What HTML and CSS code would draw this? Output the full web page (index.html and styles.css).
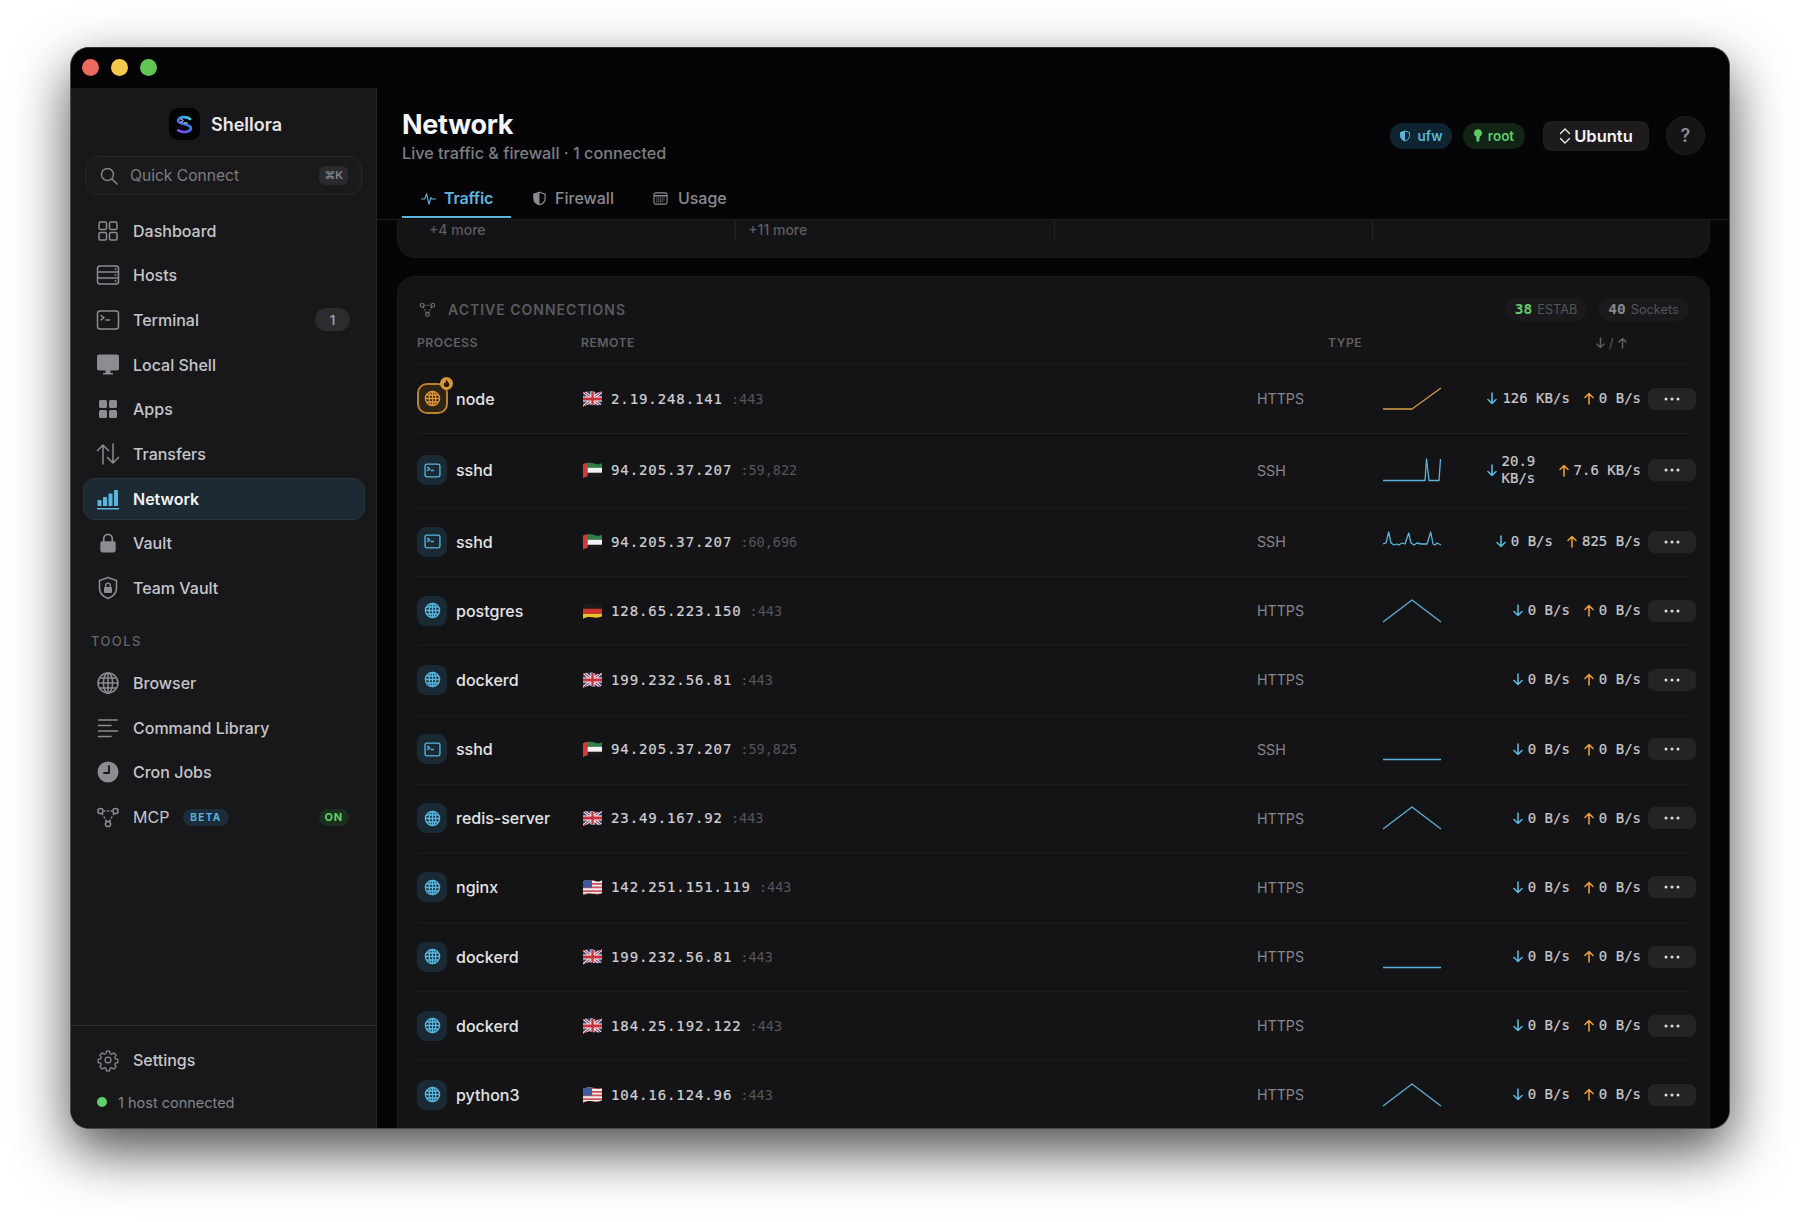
FILE: index.html
```html
<!DOCTYPE html>
<html lang="en">
<head>
<meta charset="utf-8">
<title>Shellora – Network</title>
<link rel="stylesheet" href="styles.css">
</head>
<body>
<svg class="defs" aria-hidden="true">
  <symbol id="i-globe" viewBox="0 0 24 24"><g fill="none" stroke="currentColor"><circle cx="12" cy="12" r="10"/><ellipse cx="12" cy="12" rx="4.6" ry="10"/><path d="M12 2v20M2 12h20M3.4 7h17.2M3.4 17h17.2"/></g></symbol>
  <symbol id="i-term" viewBox="0 0 24 24"><g fill="none" stroke="currentColor" stroke-linejoin="round" stroke-linecap="round"><rect x="1.5" y="3" width="21" height="18" rx="2.5"/><path d="M5 7.5l3 2.2-3 2.2M10 12h3.5"/></g></symbol>
  <symbol id="i-net" viewBox="0 0 24 24"><g fill="none" stroke="currentColor" stroke-width="1.5"><circle cx="4.5" cy="6" r="2.6"/><circle cx="19.5" cy="6" r="2.6"/><circle cx="12" cy="19" r="2.6"/><path d="M7.5 6h9M6 8.5l4.6 8M18 8.5l-4.6 8" stroke-dasharray="2 1.6"/></g></symbol>
  <symbol id="i-shield" viewBox="0 0 24 24"><path d="M12 2l9 3v6.500c0 5.300-3.700 9-9 10.500-5.300-1.500-9-5.200-9-10.500V5z" fill="none" stroke="currentColor" stroke-width="2"/><path d="M12 2l-9 3v6.500c0 5.300 3.700 9 9 10.500z" fill="currentColor"/></symbol>
  <symbol id="i-down" viewBox="0 0 10 13"><path d="M5 1v10.500M1 7.500l4 4 4-4" fill="none" stroke="currentColor" stroke-width="1.600" stroke-linecap="round" stroke-linejoin="round"/></symbol>
  <symbol id="i-up" viewBox="0 0 10 13"><path d="M5 12V1.500M1 5.500l4-4 4 4" fill="none" stroke="currentColor" stroke-width="1.600" stroke-linecap="round" stroke-linejoin="round"/></symbol>
  <symbol id="i-more" viewBox="0 0 16 4"><g fill="currentColor"><circle cx="2" cy="2" r="1.500"/><circle cx="8" cy="2" r="1.500"/><circle cx="14" cy="2" r="1.500"/></g></symbol>
  <symbol id="f-uk" viewBox="0 0 20 14" preserveAspectRatio="none"><rect width="20" height="14" fill="#2f3f78"/><path d="M0 0l20 14M20 0L0 14" stroke="#eee" stroke-width="3"/><path d="M0 0l20 14M20 0L0 14" stroke="#c8303f" stroke-width="1"/><path d="M10 0v14M0 7h20" stroke="#eee" stroke-width="4.500"/><path d="M10 0v14M0 7h20" stroke="#c8303f" stroke-width="2.500"/></symbol>
  <symbol id="f-ae" viewBox="0 0 20 14" preserveAspectRatio="none"><rect width="20" height="5" fill="#2e8049"/><rect y="5" width="20" height="4.500" fill="#f2f2f2"/><rect y="9.500" width="20" height="4.500" fill="#1a1a1a"/><rect width="5" height="14" fill="#d03a3a"/></symbol>
  <symbol id="f-de" viewBox="0 0 20 14" preserveAspectRatio="none"><rect width="20" height="5" fill="#1c1c1c"/><rect y="5" width="20" height="4.500" fill="#d0342f"/><rect y="9.500" width="20" height="4.500" fill="#f0bf2c"/></symbol>
  <symbol id="f-us" viewBox="0 0 20 14" preserveAspectRatio="none"><rect width="20" height="14" fill="#eee"/><path d="M0 1h20M0 4.200h20M0 7.400h20M0 10.600h20M0 13.400h20" stroke="#d0525a" stroke-width="1.600"/><rect width="9.500" height="7.500" fill="#3d5a9e"/></symbol>
</svg>

<div class="window">
  <div class="titlebar">
    <span class="light light-red"></span><span class="light light-yellow"></span><span class="light light-green"></span>
  </div>
  <div class="body">
    <aside class="sidebar">
      <div class="brand">
        <span class="logo">
          <svg width="19" height="21" viewBox="0 0 24 24"><defs><linearGradient id="lg" x1=".9" y1="0" x2=".1" y2="1"><stop offset="0" stop-color="#3fd8d0"/><stop offset=".45" stop-color="#3a78f0"/><stop offset="1" stop-color="#8f45f0"/></linearGradient></defs><path d="M19 5C15 2 6 1.500 4 6.500c-1.500 5 15 4.500 16 9.500 .8 5.500-10 7-16 3.500" fill="none" stroke="url(#lg)" stroke-width="3.400" stroke-linecap="round"/><path d="M7.500 5l3 2-3 2M11.500 10h4" fill="none" stroke="#eef" stroke-width="1.200" stroke-linecap="round"/></svg>
        </span>
        <span class="brand-name">Shellora</span>
      </div>
      <div class="search">
        <svg class="search-icon" width="18" height="18" viewBox="0 0 18 18"><circle cx="7.500" cy="7.500" r="6" fill="none" stroke="currentColor" stroke-width="1.500"/><path d="M12 12l5 5" stroke="currentColor" stroke-width="1.500" stroke-linecap="round"/></svg>
        <span class="search-label">Quick Connect</span>
        <span class="kbd">⌘K</span>
      </div>
      <nav class="nav">
        <a class="item"><svg class="nav-icon" viewBox="0 0 24 24"><g fill="none" stroke="currentColor" stroke-width="1.500"><rect x="3" y="3" width="7.500" height="7.500" rx="1.500"/><rect x="13.500" y="3" width="7.500" height="7.500" rx="1.500"/><rect x="3" y="13.500" width="7.500" height="7.500" rx="1.500"/><rect x="13.500" y="13.500" width="7.500" height="7.500" rx="1.500"/></g></svg><span>Dashboard</span></a>
        <a class="item"><svg class="nav-icon" viewBox="0 0 24 24"><g fill="none" stroke="currentColor" stroke-width="1.500"><rect x="1.500" y="3" width="21" height="18" rx="2.500"/><path d="M1.500 9h21M1.500 15h21"/></g><g fill="currentColor"><circle cx="19.500" cy="6" r=".9"/><circle cx="19.500" cy="12" r=".9"/><circle cx="19.500" cy="18" r=".9"/></g></svg><span>Hosts</span></a>
        <a class="item"><svg class="nav-icon"><use href="#i-term"/></svg><span>Terminal</span><span class="count">1</span></a>
        <a class="item"><svg class="nav-icon" viewBox="0 0 24 24"><path fill="currentColor" d="M3 1.500h18A2 2 0 0 1 23 3.500v12a2 2 0 0 1-2 2h-6.500v2.500h2.500v1.500H7V20h2.500v-2.500H3a2 2 0 0 1-2-2v-12a2 2 0 0 1 2-2z"/></svg><span>Local Shell</span></a>
        <a class="item"><svg class="nav-icon" viewBox="0 0 24 24"><g fill="currentColor"><rect x="3" y="3" width="8" height="8" rx="1.500"/><rect x="13" y="3" width="8" height="8" rx="1.500"/><rect x="3" y="13" width="8" height="8" rx="1.500"/><rect x="13" y="13" width="8" height="8" rx="1.500"/></g></svg><span>Apps</span></a>
        <a class="item"><svg class="nav-icon" viewBox="0 0 24 24"><path d="M7 22V3M1.500 8.500L7 3l5.500 5.500M17 2v19M11.500 15.500L17 21l5.500-5.500" fill="none" stroke="currentColor" stroke-width="1.500" stroke-linecap="round" stroke-linejoin="round"/></svg><span>Transfers</span></a>
        <a class="item item-active"><svg class="nav-icon" viewBox="0 0 24 24"><g fill="currentColor"><rect x="1.500" y="13" width="4" height="6" rx=".6"/><rect x="7" y="10" width="4" height="9" rx=".6"/><rect x="12.500" y="6.500" width="4" height="12.500" rx=".6"/><rect x="18" y="3" width="4" height="16" rx=".6"/><rect x="1" y="21" width="22" height="1.500"/></g></svg><span>Network</span></a>
        <a class="item"><svg class="nav-icon" viewBox="-2 0 28 24"><path fill="currentColor" fill-rule="evenodd" d="M12 1a6 6 0 0 1 6 6v3h.500A2.500 2.500 0 0 1 21 12.500v8a2.500 2.500 0 0 1-2.500 2.500h-13A2.500 2.500 0 0 1 3 20.500v-8A2.500 2.500 0 0 1 5.500 10H6V7a6 6 0 0 1 6-6zm0 2a4 4 0 0 0-4 4v3h8V7a4 4 0 0 0-4-4z"/></svg><span>Vault</span></a>
        <a class="item"><svg class="nav-icon" viewBox="0 0 24 24"><path d="M12 1.500l8.500 3V12c0 5-3.500 8.500-8.500 10.500C7 20.500 3.500 17 3.500 12V4.500z" fill="none" stroke="currentColor" stroke-width="1.600"/><path fill="currentColor" d="M12 6.500a3 3 0 0 1 3 3V11a1 1 0 0 1 1 1v4a1 1 0 0 1-1 1H9a1 1 0 0 1-1-1v-4a1 1 0 0 1 1-1V9.500a3 3 0 0 1 3-3zm0 1.300a1.700 1.700 0 0 0-1.700 1.700V11h3.400V9.500A1.700 1.700 0 0 0 12 7.800z"/></svg><span>Team Vault</span></a>
      </nav>
      <div class="section">TOOLS</div>
      <nav class="nav nav-tools">
        <a class="item"><svg class="nav-icon"><use href="#i-globe"/></svg><span>Browser</span></a>
        <a class="item"><svg class="nav-icon" viewBox="0 0 24 24"><path d="M2.500 4h19M2.500 9.500H15M2.500 15h19M2.500 20.500H15" fill="none" stroke="currentColor" stroke-width="1.600" stroke-linecap="round"/></svg><span>Command Library</span></a>
        <a class="item"><svg class="nav-icon" viewBox="0 0 24 24"><circle cx="12" cy="12" r="10.500" fill="currentColor"/><path d="M13 6v7H8" fill="none" stroke="#18181b" stroke-width="1.800" stroke-linecap="round" stroke-linejoin="round"/></svg><span>Cron Jobs</span></a>
        <a class="item item-mcp"><svg class="nav-icon"><use href="#i-net"/></svg><span>MCP</span><span class="beta">BETA</span><span class="on">ON</span></a>
      </nav>
      <div class="foot">
        <a class="item"><svg class="nav-icon" viewBox="-1.500 -1.500 27 27"><g fill="none" stroke="currentColor" stroke-width="1.400" stroke-linejoin="round"><path d="M10.200 2h3.600l.5 2.800 1.900.8 2.400-1.600 2.500 2.500-1.600 2.400.8 1.900 2.800.5v3.600l-2.800.5-.8 1.900 1.600 2.400-2.500 2.500-2.400-1.600-1.900.8-.5 2.800h-3.600l-.5-2.800-1.900-.8-2.400 1.600-2.500-2.500 1.600-2.400-.8-1.900-2.800-.5v-3.600l2.800-.5.8-1.900-1.600-2.400L5.400 3.900l2.400 1.600 1.900-.8z"/><circle cx="12" cy="12" r="3.300"/></g></svg><span>Settings</span></a>
        <div class="status"><span class="dot"></span><span>1 host connected</span></div>
      </div>
    </aside>

    <main class="main">
      <header class="head">
        <div class="head-top">
          <div class="titles">
            <h1 class="title">Network</h1>
            <p class="sub">Live traffic &amp; firewall · 1 connected</p>
          </div>
          <div class="actions">
            <span class="chip chip-blue"><svg class="chip-icon"><use href="#i-shield"/></svg>ufw</span>
            <span class="chip chip-green"><svg class="chip-icon chip-key" viewBox="5 0 14 24"><path fill="currentColor" d="M12 1a7 7 0 0 1 3 13.300V18l-1.500 1.500L15 21l-3 2.500-3-2.500V14.300A7 7 0 0 1 12 1z"/></svg>root</span>
            <button class="distro"><svg width="12" height="18" viewBox="0 0 12 18"><path d="M1.500 6.500L6 2l4.500 4.500M1.500 11.500L6 16l4.500-4.500" fill="none" stroke="currentColor" stroke-width="1.300" stroke-linecap="round" stroke-linejoin="round"/></svg>Ubuntu</button>
            <button class="help">?</button>
          </div>
        </div>
        <div class="tabs">
          <a class="tab tab-active"><svg class="tab-icon" viewBox="0 0 16 16"><path d="M.5 8.500h3.500L6 3l2.500 11L10.500 7l1 1.500h4" fill="none" stroke="currentColor" stroke-width="1.200" stroke-linecap="round" stroke-linejoin="round"/></svg>Traffic</a>
          <a class="tab"><svg class="tab-icon"><use href="#i-shield"/></svg>Firewall</a>
          <a class="tab"><svg class="tab-icon tab-icon-cal" viewBox="0 0 16 16"><rect x="1" y="2" width="14" height="12" rx="2" fill="none" stroke="currentColor" stroke-width="1.200"/><path d="M1 5h14" stroke="currentColor" stroke-width="1.600"/><path d="M3.500 7.500h9M3.500 9.500h9M3.500 11.500h7" stroke="currentColor" stroke-width="1.100" stroke-dasharray="1.200 .7"/></svg>Usage</a>
        </div>
      </header>

      <div class="content">
        <section class="card-top">
          <div class="top-cell">+4 more</div>
          <div class="top-cell">+11 more</div>
          <div class="top-cell"></div>
          <div class="top-cell"></div>
        </section>

        <section class="card">
          <div class="card-head">
            <svg class="card-icon"><use href="#i-net"/></svg>
            <h2 class="card-title">ACTIVE CONNECTIONS</h2>
            <span class="stat stat-first"><b class="stat-green">38</b> ESTAB</span>
            <span class="stat stat-socks"><b class="stat-grey">40</b> Sockets</span>
          </div>
          <div class="thead">
            <span>PROCESS</span><span>REMOTE</span><span>TYPE</span>
            <span class="th-rate"><svg class="th-arrow"><use href="#i-down"/></svg> / <svg class="th-arrow"><use href="#i-up"/></svg></span>
          </div>

          <div class="rows">
            <div class="row row-first">
              <div class="proc proc-hot"><span class="pi pi-hot"><svg class="pi-svg"><use href="#i-globe"/></svg><span class="hot-badge"><svg width="9" height="9" viewBox="0 0 10 10"><path d="M5 .5c.4 1.800 3 3 3 5.500a3 3 0 0 1-6 0C2 4.800 2.700 4 3.300 3.500c.1.700.4 1 .8 1.200C4.100 3 4.300 1.500 5 .5z" fill="#2a1c08"/></svg></span></span><span class="name">node</span></div>
              <div class="remote"><svg class="flag"><use href="#f-uk"/></svg><span class="ip">2.19.248.141</span><span class="port">:443</span></div>
              <div class="type">HTTPS</div>
              <svg class="spark spark-hot" viewBox="0 0 58 24"><path d="M0 22h29L58 1"/></svg>
              <div class="rates"><span class="rate"><svg class="arr arr-down"><use href="#i-down"/></svg>126 KB/s</span><span class="rate"><svg class="arr arr-up"><use href="#i-up"/></svg>0 B/s</span></div>
              <button class="more"><svg width="16" height="4"><use href="#i-more"/></svg></button>
            </div>
            <div class="row row-tall">
              <div class="proc"><span class="pi"><svg class="pi-svg"><use href="#i-term"/></svg></span><span class="name">sshd</span></div>
              <div class="remote"><svg class="flag"><use href="#f-ae"/></svg><span class="ip">94.205.37.207</span><span class="port">:59,822</span></div>
              <div class="type">SSH</div>
              <svg class="spark" viewBox="0 0 58 24"><path d="M0 22.500h42L43.500 1 46 22.500h10L57.500 1"/></svg>
              <div class="rates"><span class="rate rate-wrap"><svg class="arr arr-down"><use href="#i-down"/></svg><span>20.9 KB/s</span></span><span class="rate"><svg class="arr arr-up"><use href="#i-up"/></svg>7.6 KB/s</span></div>
              <button class="more"><svg width="16" height="4"><use href="#i-more"/></svg></button>
            </div>
            <div class="row">
              <div class="proc"><span class="pi"><svg class="pi-svg"><use href="#i-term"/></svg></span><span class="name">sshd</span></div>
              <div class="remote"><svg class="flag"><use href="#f-ae"/></svg><span class="ip">94.205.37.207</span><span class="port">:60,696</span></div>
              <div class="type">SSH</div>
              <svg class="spark" viewBox="0 0 58 24"><path d="M0 14l3-1L5.700 2 8 13l3 2 3-1 2 1 3-2 3 1L25.700 3 28 13l3 2 3-2 4 1h6l3.700-12L50 14l2 1 2-2 2 1 2 1"/></svg>
              <div class="rates"><span class="rate"><svg class="arr arr-down"><use href="#i-down"/></svg>0 B/s</span><span class="rate"><svg class="arr arr-up"><use href="#i-up"/></svg>825 B/s</span></div>
              <button class="more"><svg width="16" height="4"><use href="#i-more"/></svg></button>
            </div>
            <div class="row">
              <div class="proc"><span class="pi"><svg class="pi-svg"><use href="#i-globe"/></svg></span><span class="name">postgres</span></div>
              <div class="remote"><svg class="flag"><use href="#f-de"/></svg><span class="ip">128.65.223.150</span><span class="port">:443</span></div>
              <div class="type">HTTPS</div>
              <svg class="spark" viewBox="0 0 58 24"><path d="M0 23L29 1l29 22"/></svg>
              <div class="rates"><span class="rate"><svg class="arr arr-down"><use href="#i-down"/></svg>0 B/s</span><span class="rate"><svg class="arr arr-up"><use href="#i-up"/></svg>0 B/s</span></div>
              <button class="more"><svg width="16" height="4"><use href="#i-more"/></svg></button>
            </div>
            <div class="row">
              <div class="proc"><span class="pi"><svg class="pi-svg"><use href="#i-globe"/></svg></span><span class="name">dockerd</span></div>
              <div class="remote"><svg class="flag"><use href="#f-uk"/></svg><span class="ip">199.232.56.81</span><span class="port">:443</span></div>
              <div class="type">HTTPS</div>
              <svg class="spark" viewBox="0 0 58 24"></svg>
              <div class="rates"><span class="rate"><svg class="arr arr-down"><use href="#i-down"/></svg>0 B/s</span><span class="rate"><svg class="arr arr-up"><use href="#i-up"/></svg>0 B/s</span></div>
              <button class="more"><svg width="16" height="4"><use href="#i-more"/></svg></button>
            </div>
            <div class="row">
              <div class="proc"><span class="pi"><svg class="pi-svg"><use href="#i-term"/></svg></span><span class="name">sshd</span></div>
              <div class="remote"><svg class="flag"><use href="#f-ae"/></svg><span class="ip">94.205.37.207</span><span class="port">:59,825</span></div>
              <div class="type">SSH</div>
              <svg class="spark" viewBox="0 0 58 24"><path d="M0 22.500h58"/></svg>
              <div class="rates"><span class="rate"><svg class="arr arr-down"><use href="#i-down"/></svg>0 B/s</span><span class="rate"><svg class="arr arr-up"><use href="#i-up"/></svg>0 B/s</span></div>
              <button class="more"><svg width="16" height="4"><use href="#i-more"/></svg></button>
            </div>
            <div class="row">
              <div class="proc"><span class="pi"><svg class="pi-svg"><use href="#i-globe"/></svg></span><span class="name">redis-server</span></div>
              <div class="remote"><svg class="flag"><use href="#f-uk"/></svg><span class="ip">23.49.167.92</span><span class="port">:443</span></div>
              <div class="type">HTTPS</div>
              <svg class="spark" viewBox="0 0 58 24"><path d="M0 23L29 1l29 22"/></svg>
              <div class="rates"><span class="rate"><svg class="arr arr-down"><use href="#i-down"/></svg>0 B/s</span><span class="rate"><svg class="arr arr-up"><use href="#i-up"/></svg>0 B/s</span></div>
              <button class="more"><svg width="16" height="4"><use href="#i-more"/></svg></button>
            </div>
            <div class="row">
              <div class="proc"><span class="pi"><svg class="pi-svg"><use href="#i-globe"/></svg></span><span class="name">nginx</span></div>
              <div class="remote"><svg class="flag"><use href="#f-us"/></svg><span class="ip">142.251.151.119</span><span class="port">:443</span></div>
              <div class="type">HTTPS</div>
              <svg class="spark" viewBox="0 0 58 24"></svg>
              <div class="rates"><span class="rate"><svg class="arr arr-down"><use href="#i-down"/></svg>0 B/s</span><span class="rate"><svg class="arr arr-up"><use href="#i-up"/></svg>0 B/s</span></div>
              <button class="more"><svg width="16" height="4"><use href="#i-more"/></svg></button>
            </div>
            <div class="row">
              <div class="proc"><span class="pi"><svg class="pi-svg"><use href="#i-globe"/></svg></span><span class="name">dockerd</span></div>
              <div class="remote"><svg class="flag"><use href="#f-uk"/></svg><span class="ip">199.232.56.81</span><span class="port">:443</span></div>
              <div class="type">HTTPS</div>
              <svg class="spark" viewBox="0 0 58 24"><path d="M0 22.500h58"/></svg>
              <div class="rates"><span class="rate"><svg class="arr arr-down"><use href="#i-down"/></svg>0 B/s</span><span class="rate"><svg class="arr arr-up"><use href="#i-up"/></svg>0 B/s</span></div>
              <button class="more"><svg width="16" height="4"><use href="#i-more"/></svg></button>
            </div>
            <div class="row">
              <div class="proc"><span class="pi"><svg class="pi-svg"><use href="#i-globe"/></svg></span><span class="name">dockerd</span></div>
              <div class="remote"><svg class="flag"><use href="#f-uk"/></svg><span class="ip">184.25.192.122</span><span class="port">:443</span></div>
              <div class="type">HTTPS</div>
              <svg class="spark" viewBox="0 0 58 24"></svg>
              <div class="rates"><span class="rate"><svg class="arr arr-down"><use href="#i-down"/></svg>0 B/s</span><span class="rate"><svg class="arr arr-up"><use href="#i-up"/></svg>0 B/s</span></div>
              <button class="more"><svg width="16" height="4"><use href="#i-more"/></svg></button>
            </div>
            <div class="row">
              <div class="proc"><span class="pi"><svg class="pi-svg"><use href="#i-globe"/></svg></span><span class="name">python3</span></div>
              <div class="remote"><svg class="flag"><use href="#f-us"/></svg><span class="ip">104.16.124.96</span><span class="port">:443</span></div>
              <div class="type">HTTPS</div>
              <svg class="spark" viewBox="0 0 58 24"><path d="M0 23L29 1l29 22"/></svg>
              <div class="rates"><span class="rate"><svg class="arr arr-down"><use href="#i-down"/></svg>0 B/s</span><span class="rate"><svg class="arr arr-up"><use href="#i-up"/></svg>0 B/s</span></div>
              <button class="more"><svg width="16" height="4"><use href="#i-more"/></svg></button>
            </div>
          </div>
        </section>
      </div>
    </main>
  </div>
</div>
</body>
</html>
```

FILE: styles.css
```css
* { box-sizing: border-box; margin: 0; padding: 0; }
html, body { height: 100%; }
body {
  background: #fff;
  padding: 47px 70px 93px;
  overflow: hidden;
  font-family: Inter, "Liberation Sans", sans-serif;
  color: #c8c8cc;
  -webkit-font-smoothing: antialiased;
}
.defs { display: none; }
button { font: inherit; border: 0; }

.window {
  height: 1082px;
  display: flex;
  flex-direction: column;
  border: 1px solid #4a4a4c;
  border-top-color: #333335;
  border-radius: 19px;
  overflow: hidden;
  background: #050507;
  box-shadow: 0 22px 55px rgba(0, 0, 0, .7);
}
.titlebar {
  height: 40px;
  flex: none;
  display: flex;
  align-items: center;
  gap: 12px;
  padding: 0 0 1px 11px;
  background: #040406;
}
.light { width: 17px; height: 17px; border-radius: 50%; }
.light-red { background: #ec6a5e; }
.light-yellow { background: #f4c84f; }
.light-green { background: #61c554; }

.body { flex: 1; min-height: 0; display: flex; }

/* Sidebar */
.sidebar {
  width: 306px;
  flex: none;
  display: flex;
  flex-direction: column;
  background: #18181b;
  border-right: 1px solid #242427;
  stroke-width: 1.500;
}
.brand {
  margin-top: 20px;
  height: 32px;
  display: flex;
  align-items: center;
  gap: 11px;
  padding-left: 98px;
}
.logo {
  width: 31px;
  height: 32px;
  border-radius: 9px;
  background: #030406;
  display: flex;
  align-items: center;
  justify-content: center;
}
.brand-name { font-size: 18px; font-weight: 600; color: #e6e6e8; }
.search {
  margin: 16px 14px 0;
  height: 39px;
  display: flex;
  align-items: center;
  padding: 0 13px 0 14px;
  background: #1a1a1d;
  border: 1px solid #28282b;
  border-radius: 13px;
  color: #7c7c82;
}
.search-icon { flex: none; margin-right: 12px; color: #85858a; }
.search-label { flex: 1; font-size: 15.600px; }
.kbd {
  background: #2a2a2d;
  color: #85858a;
  border-radius: 6px;
  font-size: 11px;
  font-weight: 600;
  padding: 3px 5px;
  line-height: 13px;
}
.nav { margin: 14.600px 11px 0 12px; display: flex; flex-direction: column; gap: 2.7px; }
.nav-tools { margin-top: 0; }
.item {
  height: 42px;
  display: flex;
  align-items: center;
  gap: 13px;
  padding: 0 14px 0 12px;
  font-size: 16px;
  font-weight: 500;
  color: #c6c6ca;
  border-radius: 12px;
  border: 1px solid transparent;
}
.nav-icon { width: 24px; height: 24px; flex: none; color: #8c8c91; }
.item-active {
  background: #1d2a33;
  border-color: #26353f;
  color: #f2f2f4;
  font-weight: 600;
}
.item-active .nav-icon { color: #5ab5dc; }
.count {
  margin-left: auto;
  width: 35px;
  height: 23px;
  border-radius: 12px;
  background: #2c2c2f;
  color: #a0a0a4;
  font-size: 13px;
  font-weight: 600;
  display: flex;
  align-items: center;
  justify-content: center;
}
.item-mcp { font-weight: 400; }
.beta {
  margin-left: 1px;
  height: 17px;
  padding: 0 7px;
  border-radius: 9px;
  background: #1b2d3a;
  color: #5ab5dc;
  font-size: 10px;
  font-weight: 700;
  letter-spacing: 1.300px;
  line-height: 17px;
}
.on {
  margin-left: auto;
  margin-right: 1px;
  height: 17px;
  padding: 0 6px;
  border-radius: 9px;
  background: #1b2e1f;
  color: #5fd068;
  font-size: 11px;
  font-weight: 700;
  letter-spacing: .8px;
  line-height: 17px;
}
.section {
  margin: 24.400px 0 12.500px 20px;
  font-size: 13px;
  line-height: 16px;
  font-weight: 500;
  letter-spacing: 1.4px;
  color: #636368;
}
.foot {
  margin-top: auto;
  border-top: 1px solid #303033;
  padding: 13px 11px 17px 12px;
}
.status {
  margin: 12px 0 0 14px;
  height: 18px;
  display: flex;
  align-items: center;
  gap: 11px;
  font-size: 14.500px;
  color: #85858a;
}
.dot { width: 10px; height: 10px; border-radius: 50%; background: #5fd068; }

/* Main */
.main { flex: 1; min-width: 0; display: flex; flex-direction: column; background: #050507; }
.head { flex: none; height: 132px; padding: 20px 24px 0 25px; border-bottom: 1px solid #1c1c1f; }
.head-top { height: 55px; display: flex; justify-content: space-between; align-items: flex-start; }
.titles { padding-top: 1px; }
.title { font-size: 27px; line-height: 32px; font-weight: 700; color: #f6f6f8; letter-spacing: -.3px; }
.sub { margin-top: 1px; font-size: 16.200px; line-height: 22px; font-weight: 500; color: #7d7d82; }
.actions { display: flex; align-items: center; margin-top: 8px; }
.chip {
  height: 26px;
  width: 62px;
  border-radius: 13px;
  display: flex;
  align-items: center;
  justify-content: center;
  gap: 6px;
  font-size: 13.500px;
  font-weight: 600;
}
.chip-icon { width: 12px; height: 14px; }
.chip-key { width: 8px; height: 15px; }
.chip-blue { background: #0f2431; color: #5ab5dc; }
.chip-green { background: #122415; color: #5fcc68; margin-left: 11px; }
.distro {
  margin-left: 18px;
  width: 106px;
  height: 30px;
  border-radius: 8px;
  background: #1c1c1e;
  color: #f2f2f4;
  font-size: 16.500px;
  font-weight: 600;
  display: flex;
  align-items: center;
  justify-content: center;
  gap: 3px;
}
.help {
  margin-left: 17px;
  width: 39px;
  height: 39px;
  border-radius: 50%;
  background: #151517;
  border: 1px solid #202023;
  color: #8a8a8e;
  font-size: 18px;
  font-weight: 600;
}
.tabs { margin-top: 17px; display: flex; height: 39px; }
.tab {
  height: 38px;
  padding: 0 19px;
  display: flex;
  align-items: center;
  gap: 8px;
  font-size: 16px;
  font-weight: 500;
  color: #8a8a8f;
  border-bottom: 2px solid transparent;
}
.tab-icon { width: 15px; height: 15px; flex: none; }
.tab-icon-cal { margin: 0 2px 0 1px; }
.tab-active { color: #5eb5dc; font-weight: 600; letter-spacing: -.2px; border-bottom-color: #5eb5dc; padding-right: 18px; margin-right: 2px; }

.content { flex: 1; min-height: 0; overflow: hidden; padding: 0 19px 0 20px; }
.card-top {
  height: 38px;
  display: grid;
  grid-template-columns: repeat(4, 1fr);
  padding: 0 19px;
  background: #141416;
  border: 1px solid #1c1c1f;
  border-top: 0;
  border-radius: 0 0 19px 19px;
}
.top-cell {
  height: 20px;
  line-height: 20px;
  padding-left: 12px;
  font-size: 14px;
  font-weight: 500;
  color: #5c5c61;
}
.top-cell + .top-cell { border-left: 1px solid #232326; }
.card {
  margin-top: 18px;
  background: #141416;
  border: 1px solid #1c1c1f;
  border-bottom: 0;
  border-radius: 19px 19px 0 0;
  padding: 20px 20px 0 19px;
}
.card-head { height: 24px; display: flex; align-items: center; }
.card-icon { width: 17px; height: 17px; margin: 0 12px 0 2px; color: #77777c; flex: none; }
.card-title { font-size: 14px; font-weight: 600; letter-spacing: 1.000px; color: #5a5a5f; }
.stat {
  height: 24px;
  width: 91px;
  margin-left: 11px;
  border-radius: 12px;
  background: #1a1a1d;
  display: flex;
  align-items: center;
  justify-content: center;
  gap: 5px;
  font-size: 12.700px;
  color: #55555a;
}
.stat-first { margin-left: auto; width: 82px; }
.stat b { font-family: "DejaVu Sans Mono", monospace; font-size: 14.500px; font-weight: 700; }
.stat-green { color: #5fcc68; }
.stat-grey { color: #87878c; }
.thead {
  height: 43px;
  padding-bottom: 12px;
  display: grid;
  grid-template-columns: 164px 747px 268px 1fr;
  align-items: end;
  font-size: 12.200px;
  line-height: 16px;
  font-weight: 600;
  letter-spacing: .5px;
  color: #5f5f64;
  border-bottom: 1px solid #1d1d20;
}
.th-rate { display: flex; align-items: center; gap: 4px; font-weight: 400; }
.th-arrow { width: 9px; height: 12px; }
.rows { margin-right: -8px; }
.row {
  height: 69.150px;
  display: grid;
  grid-template-columns: 164px 676px 126px 58px 200px 55px;
  align-items: center;
  background: linear-gradient(#1d1d20, #1d1d20) top left / calc(100% - 8px) 1px no-repeat;
}
.row-first { background: none; }
.row-tall { height: 74px; }
.proc { display: flex; align-items: center; gap: 9px; }
.proc-hot { gap: 8px; }
.pi {
  position: relative;
  width: 30px;
  height: 30px;
  flex: none;
  border-radius: 9px;
  background: #1a2a35;
  color: #5ab5dc;
  display: flex;
  align-items: center;
  justify-content: center;
}
.pi-svg { width: 17px; height: 17px; stroke-width: 1.900; }
.pi-hot { background: #2e2413; border: 2px solid #b8832f; color: #d9953a; width: 31px; height: 31px; border-radius: 10px; }
.hot-badge {
  position: absolute;
  top: -8px;
  right: -7px;
  width: 13px;
  height: 13px;
  border-radius: 50%;
  background: #d9953a;
  display: flex;
  align-items: center;
  justify-content: center;
}
.name { font-size: 16px; font-weight: 500; color: #e4e4e6; }
.remote { display: flex; align-items: center; padding-left: 2px; }
.flag {
  width: 19px;
  height: 16px;
  flex: none;
  margin-right: 9px;
  clip-path: path("M0 2 C5 0 9 .5 12 1.500 S17 2 19 .8 V13.500 C15 15.500 12 14.800 9 14.300 S3 14 0 16 Z");
}
.ip {
  font-family: "DejaVu Sans Mono", monospace;
  font-size: 14px;
  letter-spacing: .9px;
  color: #d0d0d4;
  -webkit-text-stroke: .2px #d0d0d4;
}
.port {
  margin-left: 8px;
  font-family: "DejaVu Sans Mono", monospace;
  font-size: 13.500px;
  color: #55555a;
}
.type { font-size: 14.200px; color: #87878c; }
.spark { width: 58px; height: 24px; fill: none; stroke: #5ab5dc; stroke-width: 1.300; stroke-linejoin: round; }
.spark-hot { stroke: #d69a4a; }
.rates {
  display: flex;
  justify-content: flex-end;
  align-items: center;
  gap: 14px;
  font-family: "DejaVu Sans Mono", monospace;
  font-size: 14px;
  line-height: 17px;
  color: #c9c9cd;
  -webkit-text-stroke: .2px #c9c9cd;
}
.rate { display: flex; align-items: center; gap: 5px; white-space: nowrap; }
.rate-wrap { width: 58px; white-space: normal; }
.rate-wrap span { width: 40px; }
.arr { width: 10px; height: 13px; flex: none; }
.arr-down { color: #5ab5dc; }
.arr-up { color: #e69c3a; }
.more {
  justify-self: end;
  width: 48px;
  height: 22px;
  border-radius: 7px;
  background: #242426;
  color: #e0e0e2;
  display: flex;
  align-items: center;
  justify-content: center;
}
```
